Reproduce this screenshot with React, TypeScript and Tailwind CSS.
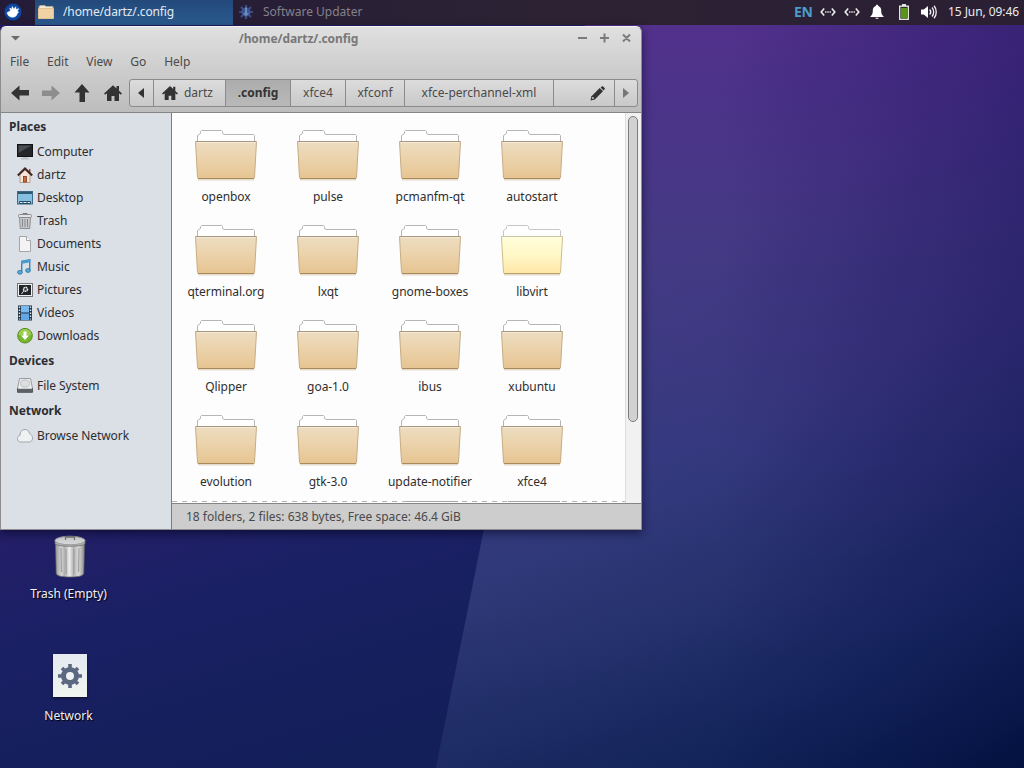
import type { ReactNode } from 'react'

type PlaceIcon =
  | 'computer'
  | 'home'
  | 'desktop'
  | 'trash'
  | 'document'
  | 'music'
  | 'pictures'
  | 'videos'
  | 'downloads'
  | 'drive'
  | 'cloud'

interface Place {
  label: string
  icon: PlaceIcon
}

const SECTIONS: { title: string; places: Place[] }[] = [
  {
    title: 'Places',
    places: [
      { label: 'Computer', icon: 'computer' },
      { label: 'dartz', icon: 'home' },
      { label: 'Desktop', icon: 'desktop' },
      { label: 'Trash', icon: 'trash' },
      { label: 'Documents', icon: 'document' },
      { label: 'Music', icon: 'music' },
      { label: 'Pictures', icon: 'pictures' },
      { label: 'Videos', icon: 'videos' },
      { label: 'Downloads', icon: 'downloads' },
    ],
  },
  { title: 'Devices', places: [{ label: 'File System', icon: 'drive' }] },
  { title: 'Network', places: [{ label: 'Browse Network', icon: 'cloud' }] },
]

const FOLDERS = [
  'openbox',
  'pulse',
  'pcmanfm-qt',
  'autostart',
  'qterminal.org',
  'lxqt',
  'gnome-boxes',
  'libvirt',
  'Qlipper',
  'goa-1.0',
  'ibus',
  'xubuntu',
  'evolution',
  'gtk-3.0',
  'update-notifier',
  'xfce4',
]

const HOVERED = 'libvirt'
const MENUS = ['File', 'Edit', 'View', 'Go', 'Help']

function Wallpaper() {
  return (
    <svg className="absolute inset-0" width="1024" height="768" viewBox="0 0 1024 768">
      <defs>
        <linearGradient id="wp-left" gradientUnits="userSpaceOnUse" x1="0" y1="510" x2="90" y2="820">
          <stop offset="0" stopColor="#251e68" />
          <stop offset="0.4" stopColor="#1b2065" />
          <stop offset="1" stopColor="#131f59" />
        </linearGradient>
        <linearGradient id="wp-right" gradientUnits="userSpaceOnUse" x1="700" y1="0" x2="700" y2="768">
          <stop offset="0" stopColor="#55308e" />
          <stop offset="0.12" stopColor="#4c3389" />
          <stop offset="0.3" stopColor="#453984" />
          <stop offset="0.6" stopColor="#393c83" />
          <stop offset="0.8" stopColor="#313b7a" />
          <stop offset="1" stopColor="#25336c" />
        </linearGradient>
        <linearGradient id="wp-shade" gradientUnits="userSpaceOnUse" x1="690" y1="250" x2="1010" y2="800">
          <stop offset="0" stopColor="#0a1c52" stopOpacity="0" />
          <stop offset="0.3" stopColor="#0a1c52" stopOpacity="0.1" />
          <stop offset="0.5" stopColor="#0a1c50" stopOpacity="0.32" />
          <stop offset="0.7" stopColor="#081c50" stopOpacity="0.64" />
          <stop offset="1" stopColor="#010f3c" stopOpacity="1" />
        </linearGradient>
        <linearGradient id="wp-corner" gradientUnits="userSpaceOnUse" x1="720" y1="0" x2="1024" y2="0">
          <stop offset="0" stopColor="#230f60" stopOpacity="0" />
          <stop offset="1" stopColor="#1f1460" stopOpacity="0.5" />
        </linearGradient>
      </defs>
      <rect width="1024" height="768" fill="url(#wp-left)" />
      <path d="M590 0H1024V768H436Z" fill="url(#wp-right)" />
      <path d="M590 0H1024V768H436Z" fill="url(#wp-corner)" />
      <path d="M590 0H1024V768H436Z" fill="url(#wp-shade)" />
    </svg>
  )
}

function XubuntuLogo() {
  return (
    <svg width="18" height="18" viewBox="0 0 18 18">
      <circle cx="9" cy="9" r="8.500" fill="#0b47a0" />
      <path
        d="M3 9.800 6.500 7.800 5.800 5l1.900 1.300L8.300 3.500 9.800 6.200 11.700 3.800 12 6.500l2.600-.8-1.200 2.500 1.200.8-1.300 1.500c-.5 2.300-2.300 3.700-4.800 3.700C5.500 14.200 3.800 12.500 3 9.800Z"
        fill="#fff"
        stroke="#fff"
        strokeWidth=".6"
        strokeLinejoin="round"
      />
    </svg>
  )
}

function MiniFolder() {
  return (
    <svg width="16" height="16" viewBox="0 0 16 16">
      <path d="M1 5V2.500L2 1.500h5l1 1h7V5" fill="#f0e8dc" stroke="#b9a98f" />
      <path d="M.5 4.500h15v10h-15Z" fill="#f0d2a4" stroke="#e2c08f" />
    </svg>
  )
}

function UpdaterIcon() {
  return (
    <svg width="16" height="16" viewBox="0 0 16 16">
      <path d="M8 1v14M1 8h14M3 3l10 10M13 3 3 13" stroke="#374d84" strokeWidth="2.200" />
      <circle cx="8" cy="8" r="4.500" fill="#3a5590" />
      <path d="M7 3.500h2V9h2l-3 3.500L5 9h2Z" fill="#6f89ba" />
    </svg>
  )
}

function LinkIcon() {
  return (
    <svg width="16" height="12" viewBox="0 0 16 12">
      <path d="M4.200 2.500 1.200 6l3 3.500M11.800 2.500l3 3.500-3 3.500" fill="none" stroke="#eee" strokeWidth="1.600" />
      <path d="M5 5.300h1.500v1.500H5ZM7.300 5.300h1.500v1.500H7.300ZM9.600 5.300H11v1.500H9.600Z" fill="#ddd" />
    </svg>
  )
}

function BellIcon() {
  return (
    <svg width="14" height="16" viewBox="0 0 14 16">
      <path d="M7 .8c.8 0 1.200.5 1.200 1.200C10.400 2.600 11.200 4.400 11.200 6.500c0 3 .6 4.300 2.300 5.700v.8H.5v-.8c1.700-1.400 2.300-2.700 2.300-5.700 0-2.100.8-3.900 3-4.500C5.800 1.300 6.200.8 7 .8Z" fill="#fff" />
      <path d="M5.300 13.700h3.400c-.3 1.600-3.100 1.600-3.400 0Z" fill="#fff" />
    </svg>
  )
}

function BatteryIcon() {
  return (
    <svg width="10" height="16" viewBox="0 0 10 16">
      <rect x="3" y="0" width="4" height="2" fill="#ddd" />
      <rect x=".7" y="2.200" width="8.600" height="13.100" fill="#26321c" stroke="#eee" strokeWidth="1.300" />
      <rect x="2" y="4" width="6" height="10" fill="#5a9418" />
    </svg>
  )
}

function VolumeIcon() {
  return (
    <svg width="16" height="14" viewBox="0 0 16 14">
      <path d="M0 4.500h2.800L7 1v12L2.800 9.500H0Z" fill="#fff" />
      <path d="M8.700 4.500c1.200 1.400 1.200 3.600 0 5M11 2.500c2.200 2.400 2.200 6.600 0 9M13 .7c3 3.300 3 9.300 0 12.600" fill="none" stroke="#f1f1f1" strokeWidth="1.300" />
    </svg>
  )
}

function Arrow({ className }: { className: string }) {
  return (
    <svg className={className} width="18" height="18" viewBox="0 0 18 18">
      <path d="M0 9 8.500 1.500V6H18v5.500H8.500v5Z" fill="currentColor" />
    </svg>
  )
}

function HomeGlyph({ size }: { size: number }) {
  return (
    <svg width={size} height={size} viewBox="0 0 18 18" className="text-[#333]">
      <path d="M9 1.200 0 9.500l1.200 1.300L3 9.300V17h4.500v-5h3v5H15V9.300l1.800 1.500L18 9.500l-3-2.800V2h-2.500v2.400Z" fill="currentColor" />
    </svg>
  )
}

function Pencil() {
  return (
    <svg width="15" height="15" viewBox="0 0 15 15">
      <path d="M.5 14.500 1.500 10.200 9.700 2l3.300 3.300L4.800 13.500Z" fill="#333" />
      <path d="m10.600 1.500 1.200-1.100c.4-.4 1-.3 1.300 0l1.500 1.500c.4.400.4 1 0 1.400l-1.100 1.100Z" fill="#333" />
      <circle cx="2.900" cy="12" r="1" fill="#c4c4c4" />
    </svg>
  )
}

const PLACE_ART: Record<PlaceIcon, ReactNode> = {
  computer: (
    <>
      <rect x=".5" y=".5" width="15" height="12" fill="#24262a" stroke="#101214" />
      <path d="M1.500 1.500h13L1.500 9Z" fill="#4a4d52" />
      <path d="M6 13h4v1h2v1.500H4V14h2Z" fill="#bfc2c6" />
    </>
  ),
  home: (
    <>
      <path d="M3 7.500 8 3l5 4.500v8H3Z" fill="#f8e5da" stroke="#b99b8d" />
      <path d="M12 2h1.500v4H12Z" fill="#9d4b34" />
      <path d="M.8 8.500 8 1.500l7.200 7" fill="none" stroke="#412825" strokeWidth="2" />
      <rect x="6.500" y="9.500" width="3" height="5.500" fill="#c86c3c" stroke="#7c3c20" strokeWidth=".8" />
    </>
  ),
  desktop: (
    <>
      <rect x=".5" y="1.500" width="15" height="12.500" fill="#86c0e0" stroke="#3b6b88" />
      <path d="M1 2h14v2H1Z" fill="#2c5872" />
      <path d="M2.500 13.500V11.500h11v2Z" fill="#e6eef2" stroke="#234d67" />
      <path d="M6 11.500V14M10 11.500V14" stroke="#234d67" />
    </>
  ),
  trash: (
    <>
      <path d="M2.500 4.500h11L12.700 15.500H3.300Z" fill="#c7c9cb" stroke="#898c90" />
      <path d="M5.500 6v8M8 6v8M10.500 6v8" stroke="#84878b" />
      <rect x="1.500" y="1.500" width="13" height="3" rx="1" fill="#e2e3e4" stroke="#8a8d90" />
      <path d="M6 1.500V.5h4v1" fill="none" stroke="#777" />
    </>
  ),
  document: (
    <>
      <path d="M2.500.5h7l4 4v11h-11Z" fill="#f3f3f3" stroke="#a4a7aa" />
      <path d="M9.500.5v4h4" fill="#fff" stroke="#a4a7aa" />
    </>
  ),
  music: (
    <>
      <path d="M4.700 12.500V2.300L12.700.8V11" fill="none" stroke="#3987bb" strokeWidth="1.400" />
      <path d="M4 2 13.400.3V3.300L4 5Z" fill="#4b9ccf" />
      <ellipse cx="2.900" cy="13.300" rx="2.400" ry="1.900" fill="#55aadb" stroke="#286e9f" strokeWidth=".8" />
      <ellipse cx="11" cy="11.500" rx="2.400" ry="1.900" fill="#55aadb" stroke="#286e9f" strokeWidth=".8" />
    </>
  ),
  pictures: (
    <>
      <rect x=".5" y="1.500" width="15" height="13" fill="#f1f1f1" stroke="#737578" />
      <rect x="2" y="3" width="12" height="10" fill="#22262a" />
      <circle cx="8.500" cy="7.300" r="2" fill="#30353b" stroke="#e9eef1" strokeWidth="1.500" strokeDasharray="1.600 .5" />
      <path d="m4.500 12 2.200-3" stroke="#d4d9dd" />
    </>
  ),
  videos: (
    <>
      <rect x="1" y=".5" width="14" height="15" fill="#203344" />
      <rect x="4" y="1" width="8" height="6.500" fill="#76b8ef" />
      <rect x="4" y="8.500" width="8" height="6.500" fill="#62a8e7" />
      <path d="M2.500 1.500v13M13.500 1.500v13" stroke="#e3edf4" strokeWidth="1.400" strokeDasharray="1.500 1.500" />
    </>
  ),
  downloads: (
    <>
      <circle cx="8" cy="7.700" r="7.300" fill="#78b82c" stroke="#538c1c" />
      <path d="M1.500 7a6.500 6 0 0 1 13 0Z" fill="#9ccd52" />
      <path d="M6.500 3.500h3V7.500H12l-4 4.500L4 7.500h2.500Z" fill="#fff" />
    </>
  ),
  drive: (
    <>
      <path d="M2.500.5h11l2 10H.5Z" fill="#ecedee" stroke="#999c9f" />
      <ellipse cx="8" cy="5.500" rx="4.500" ry="3.500" fill="#dedfe0" stroke="#bfc1c3" />
      <path d="M.5 10.500h15v3.800H.5Z" fill="#5f6266" stroke="#55585b" />
      <path d="M1 10.500h14" stroke="#c9cbcd" />
    </>
  ),
  cloud: (
    <path
      d="M4 14c-2.200 0-3.500-1.300-3.500-3.300 0-1.800 1-3 2.500-3.300C2.800 4 4.800 1.500 8 1.500c2.700 0 4.300 1.800 4.500 4.300 1.900.5 3 2 3 4.200 0 2.500-1.300 4-3.500 4Z"
      fill="#f0f1f2"
      stroke="#a3a7ab"
    />
  ),
}

function Folder({ hovered }: { hovered: boolean }) {
  return (
    <svg width="64" height="54" viewBox="0 0 64 54" className="shrink-0">
      <defs>
        <linearGradient id={hovered ? 'folder-hover' : 'folder'} x1="0" y1="0" x2="0" y2="1">
          <stop offset="0" stopColor={hovered ? '#ffffda' : '#edddc1'} />
          <stop offset="0.500" stopColor={hovered ? '#fff8c8' : '#ebd2aa'} />
          <stop offset="1" stopColor={hovered ? '#ffe6a6' : '#e6c491'} />
        </linearGradient>
      </defs>
      <path d="M4 50.500h56" stroke="#a07840" strokeOpacity=".25" strokeWidth="2" />
      <path
        d="M3.500 14V6.500L6.500 4.500V2.500L7.500 1.500H27.500L28.500 2.500V4.500L30 5.500H59.500L60.500 6.500v8"
        fill="#fff"
        stroke={hovered ? '#c6c6c6' : '#b6b4b4'}
      />
      <path
        d="M1.500 12.500H62.500L60.500 48.500Q60.500 49.500 59.500 49.500H4.500Q3.500 49.500 3.500 48.500Z"
        fill={hovered ? 'url(#folder-hover)' : 'url(#folder)'}
        stroke={hovered ? '#d0bd8b' : '#c6ac86'}
      />
      <path d="M2 12.500h60" stroke={hovered ? '#c9c4a0' : '#a8977c'} />
      <path d="M4 49.500h56" stroke={hovered ? '#b6a06c' : '#a98a5c'} />
      <path d="M2.800 13.500h58.500" stroke="#fff" strokeOpacity=".4" />
    </svg>
  )
}

function DesktopTrash() {
  return (
    <svg width="34" height="44" viewBox="0 0 34 44">
      <defs>
        <linearGradient id="can" x1="0" y1="0" x2="1" y2="0">
          <stop offset="0" stopColor="#9a9a9a" />
          <stop offset="0.200" stopColor="#d4d4d4" />
          <stop offset="0.320" stopColor="#b0b0b0" />
          <stop offset="0.480" stopColor="#ececec" />
          <stop offset="0.620" stopColor="#b4b4b4" />
          <stop offset="0.800" stopColor="#dadada" />
          <stop offset="1" stopColor="#8a8a8a" />
        </linearGradient>
      </defs>
      <path d="M2.500 9h29l-.7 29c0 3-5.500 4-13.800 4S3.200 41 3.200 38Z" fill="url(#can)" stroke="#666" strokeWidth=".7" />
      <path d="M8 13l.4 24M13 14l.2 25M21 14l-.2 25M26 13l-.4 24" stroke="#989898" strokeWidth="1" />
      <path d="M2 5.500v3.500C5 12 29 12 32 9v-3.500Z" fill="#b3b3b3" stroke="#666" strokeWidth=".7" />
      <ellipse cx="17" cy="5.500" rx="15" ry="4.300" fill="#d5d6d7" stroke="#9b9b9b" />
      <path d="M12.500 5V2h9v3" fill="none" stroke="#777" strokeWidth="1.300" />
    </svg>
  )
}

function Gear() {
  return (
    <svg width="24" height="24" viewBox="0 0 24 24">
      <path d="M12 0v24M0 12h24M4 4l16 16M20 4 4 20" stroke="#5c6780" strokeWidth="3.600" />
      <circle cx="12" cy="12" r="6.500" fill="#edf1f2" stroke="#5c6780" strokeWidth="5" />
    </svg>
  )
}

function Panel() {
  return (
    <header className="relative flex h-[25px] items-center bg-linear-to-r from-[#241b38] via-[#2b2234] to-[#2b2033] text-xs">
      <div className="flex w-[35px] items-center pb-px pl-1">
        <XubuntuLogo />
      </div>
      <div className="flex h-[25px] w-[198px] items-center bg-linear-to-b from-[#23497a] to-[#2a5b90] pb-[2px] pl-[3px] text-[#e4ebf3]">
        <MiniFolder />
        <span className="ml-[9px] tracking-[-0.12px]">/home/dartz/.config</span>
      </div>
      <div className="flex items-center pb-[2px] pl-[5px] text-[#85808d]">
        <UpdaterIcon />
        <span className="ml-[9px]">Software Updater</span>
      </div>
      <div className="ml-auto flex items-center pr-[5px] pb-[2px]">
        <span className="w-[26px] text-sm font-bold tracking-[-0.5px] text-[#4c9ccc]">EN</span>
        <div className="flex gap-2">
          <LinkIcon />
          <LinkIcon />
        </div>
        <div className="ml-[10px] flex items-center">
          <BellIcon />
        </div>
        <div className="ml-[15px]">
          <BatteryIcon />
        </div>
        <div className="ml-3">
          <VolumeIcon />
        </div>
        <span className="ml-[11px] tracking-[-0.08px] text-[#ececec]">15 Jun, 09:46</span>
      </div>
    </header>
  )
}

function TitleBar() {
  return (
    <div className="flex h-6 items-center pr-2 pl-[10px]">
      <svg width="9" height="7" viewBox="0 0 9 7">
        <path d="M0 0h9L4.500 4.500Z" fill="#6a6a6a" />
      </svg>
      <span className="flex-1 text-center text-xs font-bold tracking-[-0.08px] text-[#787878]">/home/dartz/.config</span>
      <svg width="56" height="12" viewBox="0 0 56 12" fill="none" stroke="#7b7b7b" strokeWidth="2">
        <path d="M1 5h9M23 5h9M27.500.5v9M46 1.500l7 7M53 1.500l-7 7" />
      </svg>
    </div>
  )
}

function Crumb({ className, children }: { className: string; children: ReactNode }) {
  return (
    <button className={`flex h-full shrink-0 items-center justify-center border-r border-[#8b8b8b] ${className}`}>
      {children}
    </button>
  )
}

function Toolbar() {
  return (
    <div className="flex h-[38px] items-center pr-[3px] pl-[10px]">
      <div className="flex w-[118px] items-center gap-[13px]">
        <Arrow className="text-[#333]" />
        <Arrow className="rotate-180 text-[#8d8d8d]" />
        <Arrow className="rotate-90 text-[#333]" />
        <HomeGlyph size={18} />
      </div>
      <div className="flex h-7 flex-1 overflow-hidden rounded-[3px] border border-[#8b8b8b] bg-linear-to-b from-[#dcdcdc] to-[#c9c9c9] text-xs text-[#4a4a4a]">
        <Crumb className="w-6 pr-[2px]">
          <svg width="6" height="10" viewBox="0 0 6 10">
            <path d="M6 0v10L0 5Z" fill="#333" />
          </svg>
        </Crumb>
        <Crumb className="w-[72px] gap-[6px] pr-1">
          <HomeGlyph size={16} />
          dartz
        </Crumb>
        <Crumb className="w-[65px] bg-linear-to-b from-[#acacac] to-[#b9b9b9] font-bold text-[#333]">.config</Crumb>
        <Crumb className="w-[55px]">xfce4</Crumb>
        <Crumb className="w-[59px]">xfconf</Crumb>
        <Crumb className="w-[149px]">xfce-perchannel-xml</Crumb>
        <Crumb className="w-[61px] pl-[26px]">
          <Pencil />
        </Crumb>
        <div className="flex flex-1 items-center justify-center">
          <svg width="6" height="10" viewBox="0 0 6 10">
            <path d="M0 0v10l6-5Z" fill="#777" />
          </svg>
        </div>
      </div>
    </div>
  )
}

function Sidebar() {
  return (
    <aside className="w-[171px] shrink-0 border-r border-[#7c7e82] bg-[#dbdfe6] text-xs tracking-[-0.06px] text-[#2c2e32]">
      {SECTIONS.map((section) => (
        <section key={section.title}>
          <h2 className="flex h-[27px] items-center pl-2 font-bold">{section.title}</h2>
          {section.places.map((place) => (
            <div key={place.label} className="flex h-[23px] items-center gap-1 pl-4">
              <svg width="16" height="16" viewBox="0 0 16 16">
                {PLACE_ART[place.icon]}
              </svg>
              {place.label}
            </div>
          ))}
        </section>
      ))}
    </aside>
  )
}

function FolderView() {
  return (
    <div className="flex h-[390px] overflow-hidden bg-[#fdfdfd]">
      <div className="relative flex-1">
        <div className="grid grid-cols-[repeat(4,102px)] pt-4 pl-[3px]">
          {FOLDERS.map((name) => (
            <div key={name} className="flex h-[95px] flex-col items-center text-xs tracking-[-0.06px] text-[#2f2f2f]">
              <Folder hovered={name === HOVERED} />
              <span className="mt-[6px]">{name}</span>
            </div>
          ))}
        </div>
        {/* more rows below the fold */}
        <div className="absolute inset-x-0 bottom-[1px] h-px bg-[repeating-linear-gradient(90deg,#b5b5b5_0_5px,transparent_5px_10px)]" />
        <div className="absolute bottom-[1px] left-[234px] h-px w-[52px] bg-[#a5a5a5]" />
        <div className="absolute bottom-[1px] left-[336px] h-px w-[52px] bg-[#a5a5a5]" />
      </div>
      <div className="w-4 border-l border-[#dedede] bg-[#f1f1f1] pt-[3px] pl-[2px]">
        <div className="h-[306px] w-[10px] rounded-full border border-[#7d7d7d] bg-[#d2d2d2]" />
      </div>
    </div>
  )
}

function FileManager() {
  return (
    <main className="absolute top-[26px] left-0 h-[504px] w-[642px] overflow-hidden rounded-t-md border border-[#8d8d90] border-t-[#f2f2f2] bg-[#cfcfcf] shadow-[0_3px_10px_rgba(0,0,20,0.55)]">
      <div className="h-[86px] border-b border-[#858585] bg-linear-to-b from-[#e0e0e0] via-[#cfcfcf] via-45% to-[#bdbdbd]">
        <TitleBar />
        <nav className="flex h-[23px] items-center gap-[17.8px] pb-[2px] pl-[9px] text-xs text-[#4a4a4a]">
          {MENUS.map((menu) => (
            <span key={menu}>{menu}</span>
          ))}
        </nav>
        <Toolbar />
      </div>
      <div className="flex h-[416px]">
        <Sidebar />
        <div className="flex-1">
          <FolderView />
          <footer className="flex h-[26px] items-center border-t border-[#858585] bg-[#cdcdcd] pl-[14px] text-xs text-[#4a4a4a]">
            18 folders, 2 files: 638 bytes, Free space: 46.4 GiB
          </footer>
        </div>
      </div>
    </main>
  )
}

export default function App() {
  return (
    <div className="relative h-[768px] w-[1024px] overflow-hidden bg-[#1a2064] font-['Noto_Sans',sans-serif]">
      <Wallpaper />
      <Panel />
      <div className="absolute top-[535px] left-2 flex w-[121px] flex-col items-center text-xs text-[#eef0fa]">
        <div className="pl-[3px]">
          <DesktopTrash />
        </div>
        <span className="mt-[7px] [text-shadow:1px_1px_1px_#000]">Trash (Empty)</span>
      </div>
      <div className="absolute top-[654px] left-2 flex w-[121px] flex-col items-center text-xs text-[#eef0fa]">
        <div className="ml-[3px] flex h-[43px] w-[34px] items-center justify-center bg-linear-to-b from-[#e4eaf0] to-[#f1f4ef] shadow-[0_1px_2px_rgba(0,0,0,0.6)]">
          <Gear />
        </div>
        <span className="mt-[11px] [text-shadow:1px_1px_1px_#000]">Network</span>
      </div>
      <FileManager />
    </div>
  )
}
